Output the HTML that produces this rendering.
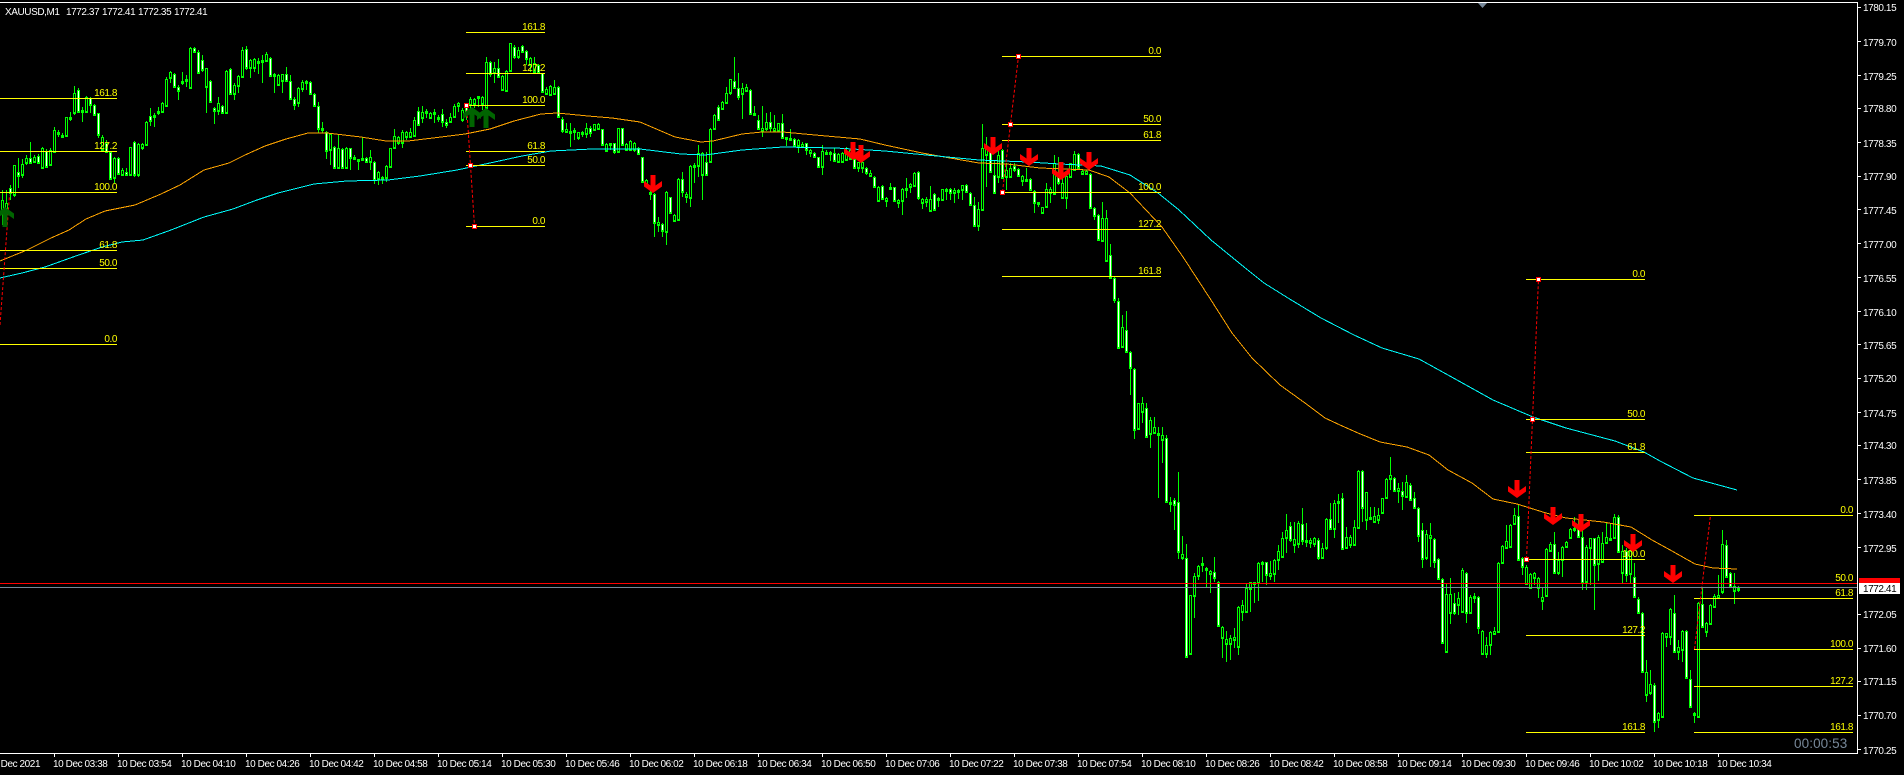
<!DOCTYPE html>
<html><head><meta charset="utf-8"><title>XAUUSD,M1</title>
<style>
html,body{margin:0;padding:0;background:#000;width:1904px;height:775px;overflow:hidden}
svg{display:block}
text{font-family:"Liberation Sans",sans-serif;font-size:10px;letter-spacing:-.42px;fill:#fff}
.y text{fill:#ff0;text-anchor:end}
</style></head><body>
<svg width="1904" height="775" viewBox="0 0 1904 775" xmlns="http://www.w3.org/2000/svg">
<rect width="1904" height="775" fill="#000"/>
<defs>
<path id="u" d="M2 201V209M6 204V208M14 166V194M22 165V174M26 159V162M34 158V161M42 149V167M50 151V164M54 131V151M62 136V136M66 118V135M74 94V112M82 111V111M86 98V111M102 138V149M114 159V177M122 171V174M130 148V174M138 145V174M142 145V147M146 123V144M154 116V116M158 112V112M162 104V111M166 80V105M170 73V77M182 82V82M186 80V80M190 49V87M206 69V86M218 104V110M226 72V112M234 86V93M238 77V85M242 51V76M250 61V67M254 60V67M262 61V61M266 55V60M274 75V75M278 76V84M282 75V80M298 89V102M302 83V88M306 82V82M322 129V129M330 135V149M338 149V167M346 149V167M354 158V158M358 160V160M362 159V159M370 158V161M378 173V178M382 178V178M386 167V177M390 149V166M394 137V147M398 138V142M402 133V142M406 133V136M410 133V136M414 121V135M422 113V117M426 112V112M430 114V117M438 118V118M450 118V121M454 107V116M458 104V105M462 111V119M470 100V104M474 100V103M478 97V97M482 98V103M486 63V107M494 69V72M502 77V89M506 72V90M510 44V70M518 51V56M530 59V64M534 64V71M546 90V93M550 87V94M554 88V93M566 130V131M570 132V132M574 131V131M578 133V137M582 133V133M586 129V133M594 125V129M598 125V128M606 145V150M610 144V144M618 129V151M626 145V149M630 142V149M634 144V149M646 181V184M650 193V193M658 223V224M666 193V231M674 216V220M678 180V219M686 195V196M690 167V197M694 166V166M698 154V165M702 154V174M710 130V161M714 116V128M722 103V108M726 94V102M730 80V92M742 89V93M746 88V90M754 114V114M762 129V130M766 123V128M774 129V130M778 124V130M786 138V138M790 139V139M798 141V145M802 145V146M810 151V152M822 152V166M826 153V153M830 153V153M838 155V161M842 154V161M846 154V159M850 151V158M858 163V167M862 163V167M870 174V175M878 188V200M886 199V200M890 188V188M898 201V202M902 190V200M906 189V189M910 185V186M914 174V185M922 200V202M926 200V201M930 200V210M938 199V199M942 190V199M946 190V190M954 191V192M958 191V191M962 186V189M978 210V225M982 149V209M986 149V154M998 156V176M1006 171V176M1010 169V176M1022 177V180M1026 180V180M1038 203V203M1042 208V212M1046 190V206M1050 190V192M1054 164V193M1062 184V197M1066 177V197M1070 164V176M1074 155V169M1082 172V173M1086 172V173M1102 219V240M1106 219V260M1122 328V346M1138 404V428M1142 404V411M1150 421V433M1154 428V432M1158 434V434M1162 436V439M1170 503V503M1182 555V557M1190 596V653M1194 577V595M1198 567V575M1202 564V564M1206 569V569M1210 572V573M1222 628V637M1226 640V643M1230 639V643M1234 638V639M1238 608V646M1242 606V611M1246 589V611M1250 583V588M1254 583V583M1258 564V582M1262 563V563M1270 574V575M1274 561V573M1278 552V559M1282 539V556M1286 531V537M1294 540V544M1298 524V543M1306 541V541M1310 541V542M1314 539V543M1322 549V557M1326 520V547M1334 504V528M1338 502V502M1346 538V547M1350 538V544M1354 528V544M1358 472V527M1366 493V519M1370 518V518M1374 517V521M1378 516V519M1382 499V512M1386 480V497M1390 476V478M1398 489V490M1406 483V496M1426 535V557M1430 536V537M1446 595V651M1450 595V612M1458 599V604M1462 571V611M1470 598V612M1474 597V597M1482 632V653M1486 646V653M1490 633V644M1494 632V633M1498 564V631M1502 547V562M1506 542V547M1510 526V546M1514 516V523M1526 568V583M1530 575V587M1534 574V577M1538 579V587M1542 598V600M1546 550V595M1550 545V550M1558 561V572M1562 548V559M1566 543V546M1570 530V537M1574 529V529M1586 548V581M1590 539V547M1598 538V563M1602 544V561M1606 538V542M1610 539V539M1614 518V537M1622 552V572M1630 552V573M1646 673V694M1650 685V692M1658 714V719M1662 634V716M1666 634V636M1670 610V636M1678 648V651M1682 632V649M1694 714V714M1698 604V716M1706 624V631M1710 606V623M1714 597V606M1718 596V597M1722 545V591M1734 587V590M1738 589V589"/>
<path id="d" d="M10 189V192M18 173V175M30 159V162M38 157V162M46 152V166M58 133V133M70 118V118M78 91V111M90 99V104M94 106V114M98 114V134M106 144V151M110 153V178M118 159V173M126 173V174M134 143V174M150 117V120M174 75V86M178 88V90M194 49V51M198 53V72M202 61V69M210 82V101M214 109V110M222 107V112M230 70V93M246 50V67M258 62V62M270 59V75M286 75V80M290 82V98M294 100V104M310 83V93M314 95V105M318 107V128M326 133V150M334 148V167M342 150V167M350 149V157M366 159V161M374 163V179M418 112V124M434 113V113M442 115V121M446 123V124M466 106V112M490 63V73M498 69V76M514 48V56M522 47V51M526 52V58M538 66V72M542 74V91M558 88V116M562 120V130M590 129V132M602 130V144M614 144V151M622 129V144M638 149V153M642 158V181M654 195V222M662 225V230M670 198V212M682 180V191M706 163V174M718 108V119M734 82V87M738 89V96M750 91V113M758 121V128M770 123V127M782 124V137M794 140V145M806 144V149M814 154V156M818 158V166M834 154V160M854 160V167M866 169V172M874 178V186M882 187V198M894 188V200M918 173V197M934 195V209M950 190V192M966 186V191M970 194V204M974 206V225M990 153V171M994 176V192M1002 151V177M1014 167V169M1018 170V175M1030 180V189M1034 192V202M1058 178V182M1078 155V167M1090 175V207M1094 209V215M1098 216V239M1110 256V277M1114 279V299M1118 302V347M1126 331V351M1130 353V367M1134 370V429M1146 409V436M1166 439V501M1174 501V504M1178 503V551M1186 559V656M1214 573V577M1218 583V625M1266 563V574M1290 527V539M1302 525V540M1318 541V557M1330 520V528M1342 499V548M1362 472V507M1394 479V490M1402 492V495M1410 486V499M1414 499V507M1418 509V535M1422 531V558M1434 540V561M1438 560V578M1442 580V642M1454 604V612M1466 574V612M1478 598V627M1518 517V559M1522 559V566M1554 545V572M1578 530V536M1582 538V582M1594 539V564M1618 518V551M1626 552V574M1634 578V596M1638 600V612M1642 614V671M1654 686V721M1674 614V651M1686 632V677M1690 680V706M1702 605V626M1726 546V576M1730 574V586"/>
<path id="ra" d="M-2.500-18H2.500V-7.500L9-12V-6.500L0 0L-9-6.500V-12L-2.500-7.500Z" fill="#f00"/>
<path id="ga" d="M0 0L9 6.500V12L2.500 7.500V20H-2.500V7.500L-9 12V6.500Z" fill="#006400"/>
</defs>

<!-- wicks -->
<g transform="translate(.5,0)" fill="none" stroke="#0f0" stroke-width="1">
<path d="M2 190V225M6 190V225M10 185V200M14 165V197M18 158V188M22 159V178M26 155V165M30 142V163M34 155V163M38 154V163M42 147V169M46 149V168M50 148V166M54 127V153M58 130V137M62 133V138M66 117V137M70 112V121M74 86V115M78 88V113M82 107V122M86 96V113M90 97V113M94 104V116M98 113V138M102 135V152M106 140V153M110 151V180M114 157V183M118 157V175M122 168V176M126 168V176M130 147V176M134 141V177M138 143V177M142 143V150M146 121V146M150 108V126M154 113V127M158 107V115M162 102V113M166 77V107M170 71V83M174 73V88M178 85V100M182 72V85M186 75V87M190 47V89M194 47V53M198 50V74M202 55V72M206 68V113M210 80V103M214 107V124M218 97V115M222 105V114M226 70V114M230 68V95M234 83V100M238 75V93M242 47V78M246 46V70M250 59V78M254 58V72M258 58V74M262 55V83M266 52V62M270 57V77M274 73V93M278 74V86M282 74V93M286 67V82M290 75V100M294 97V110M298 87V107M302 80V92M306 80V90M310 81V95M314 93V107M318 102V133M322 122V133M326 131V159M330 133V165M334 146V169M338 135V169M342 148V169M346 147V169M350 148V170M354 155V160M358 159V170M362 137V161M366 157V162M370 150V170M374 161V184M378 171V185M382 176V184M386 165V182M390 148V167M394 129V149M398 136V145M402 130V148M406 131V140M410 128V137M414 117V136M418 107V126M422 106V123M426 109V118M430 112V119M434 109V123M438 115V122M442 109V127M446 119V128M450 113V123M454 104V117M458 102V112M462 108V122M466 103V120M470 97V110M474 98V108M478 96V107M482 96V110M486 57V109M490 61V77M494 62V83M498 59V78M502 75V91M506 70V91M510 43V71M514 45V59M518 47V59M522 45V53M526 50V65M530 57V72M534 57V73M538 64V74M542 73V93M546 87V95M550 85V96M554 80V95M558 86V117M562 117V133M566 123V133M570 123V147M574 128V140M578 132V140M582 131V137M586 123V138M590 126V137M594 124V131M598 123V130M602 129V146M606 143V152M610 143V150M614 143V154M618 128V152M622 128V146M626 143V151M630 140V151M634 142V152M638 147V155M642 157V183M646 179V187M650 187V200M654 193V237M658 217V232M662 223V237M666 191V245M670 197V214M674 214V222M678 178V221M682 172V197M686 192V203M690 165V207M694 163V183M698 145V177M702 152V200M706 152V176M710 128V162M714 114V130M718 105V121M722 101V110M726 87V103M730 79V95M734 57V89M738 73V100M742 83V119M746 84V92M750 89V115M754 106V116M758 115V130M762 106V137M766 113V131M770 112V132M774 115V132M778 123V132M782 114V139M786 137V146M790 129V141M794 138V147M798 139V153M802 142V148M806 143V155M810 149V157M814 152V158M818 157V168M822 145V175M826 150V155M830 151V161M834 148V162M838 153V162M842 152V162M846 147V161M850 149V160M854 158V168M858 162V172M862 157V173M866 167V175M870 170V177M874 176V187M878 186V201M882 185V200M886 197V207M890 183V190M894 187V202M898 199V208M902 188V215M906 178V198M910 183V193M914 172V187M918 171V200M922 198V209M926 197V207M930 186V211M934 193V211M938 197V207M942 189V201M946 188V200M950 188V200M954 188V203M958 189V199M962 185V200M966 184V193M970 192V206M974 197V227M978 202V231M982 124V211M986 137V187M990 150V172M994 160V193M998 150V183M1002 149V179M1006 163V190M1010 163V178M1014 163V172M1018 168V177M1022 175V186M1026 168V182M1030 178V191M1034 190V213M1038 202V207M1042 207V213M1046 183V208M1050 187V203M1054 155V195M1058 157V185M1062 168V198M1066 175V209M1070 163V177M1074 151V171M1078 153V169M1082 170V175M1086 170V175M1090 173V209M1094 207V220M1098 214V241M1102 202V242M1106 210V262M1110 244V279M1114 277V303M1118 298V349M1122 315V347M1126 311V352M1130 351V395M1134 368V439M1138 403V430M1142 397V423M1146 403V438M1150 417V448M1154 417V434M1158 427V498M1162 427V463M1166 435V502M1170 497V512M1174 498V530M1178 472V559M1182 536V560M1186 544V657M1190 595V655M1194 573V618M1198 565V580M1202 557V572M1206 567V588M1210 570V593M1214 557V582M1218 581V627M1222 626V658M1226 631V662M1230 635V660M1234 628V648M1238 606V655M1242 600V621M1246 583V612M1250 582V612M1254 582V603M1258 562V601M1262 561V582M1266 562V585M1270 561V580M1274 559V582M1278 545V570M1282 532V558M1286 514V553M1290 522V542M1294 522V553M1298 521V548M1302 508V545M1306 523V547M1310 538V548M1314 537V547M1318 538V560M1322 543V558M1326 518V550M1330 503V530M1334 500V538M1338 494V523M1342 493V550M1346 527V549M1350 535V548M1354 520V546M1358 470V528M1362 470V522M1366 492V530M1370 507V520M1374 507V522M1378 508V524M1382 498V514M1386 478V499M1390 457V490M1394 477V492M1398 483V503M1402 482V510M1406 475V497M1410 483V501M1414 492V508M1418 507V542M1422 523V568M1426 530V560M1430 523V567M1434 538V568M1438 558V580M1442 578V644M1446 584V652M1450 578V624M1454 593V615M1458 592V615M1462 568V613M1466 572V623M1470 595V613M1474 593V603M1478 596V634M1482 630V655M1486 637V658M1490 631V655M1494 627V635M1498 562V633M1502 545V564M1506 525V548M1510 524V548M1514 508V525M1518 504V561M1522 557V575M1526 565V585M1530 573V589M1534 572V585M1538 577V598M1542 588V610M1546 548V597M1550 542V552M1554 532V574M1558 552V575M1562 546V577M1566 541V548M1570 528V538M1574 517V532M1578 520V538M1582 527V590M1586 545V590M1590 538V585M1594 538V610M1598 535V581M1602 532V563M1606 523V544M1610 523V541M1614 514V539M1618 515V553M1622 545V583M1626 548V582M1630 550V583M1634 563V598M1638 597V613M1642 612V673M1646 660V702M1650 670V695M1654 683V732M1658 712V728M1662 632V718M1666 633V647M1670 608V645M1674 595V652M1678 640V660M1682 630V662M1686 630V678M1690 670V708M1694 712V723M1698 602V718M1702 587V628M1706 622V637M1710 604V625M1714 594V608M1718 575V598M1722 530V594M1726 540V578M1730 572V588M1734 573V604M1738 586V592"/>
</g>
<!-- bodies -->
<g transform="translate(.5,.5)" fill="none" stroke="#0f0" stroke-width="3" stroke-linecap="square">
<use href="#u"/><use href="#d"/>
</g>
<g transform="translate(.5,0)" fill="none" stroke-width="1">
<use href="#u" stroke="#000"/><use href="#d" stroke="#fff"/>
</g>

<!-- moving averages -->
<polyline fill="none" stroke="#ffa500" stroke-width="1" shape-rendering="crispEdges" points="0,261 27,250 51,238 69,230 86,219 105,211 135,205 161,194 180,185 204,170 229,163 245,155 265,146 286,139 308,133 327,133 361,137 386,141 408,141 433,138 465,134 490,129 514,121 541,114 557,113 588,116 612,118 640,122 675,137 701,142 713,141 742,134 762,132 783,132 815,135 860,139 885,145 922,153 950,158 979,163 1007,164 1040,168 1089,170 1109,177 1130,193 1162,227 1183,257 1211,300 1232,333 1252,358 1280,385 1305,403 1325,418 1340,425 1358,433 1380,442 1407,447 1429,455 1448,470 1472,483 1493,499 1517,504 1546,513 1566,518 1603,522 1631,527 1652,540 1672,551 1695,564 1713,568 1737,569"/>
<polyline fill="none" stroke="#0ff" stroke-width="1" shape-rendering="crispEdges" points="0,278 22,273 45,267 73,257 102,247 122,242 143,240 171,230 204,217 233,209 257,200 278,193 314,184 347,181 388,180 420,176 457,170 490,163 522,156 551,151 592,149 640,149 681,154 705,155 742,150 783,147 836,148 885,151 926,155 979,160 1028,162 1060,164 1101,166 1130,175 1158,193 1179,210 1211,240 1244,267 1264,283 1288,298 1321,318 1354,335 1382,348 1419,359 1448,375 1466,385 1493,400 1533,417 1566,428 1615,441 1644,452 1660,461 1693,478 1737,490"/>

<!-- fibonacci levels -->
<g stroke="#ff0" stroke-width="1" fill="none">
<path d="M0 98.500H117M0 151.500H117M0 192.500H117M0 250.500H117M0 268.500H117M0 344.500H117"/>
<path d="M466 32.500H545M466 73.500H545M466 105.500H545M466 151.500H545M466 165.500H545M466 226.500H545"/>
<path d="M1002 56.500H1161M1002 124.500H1161M1002 140.500H1161M1002 192.500H1161M1002 229.500H1161M1002 276.500H1161"/>
<path d="M1526 279.500H1645M1526 419.500H1645M1526 452.500H1645M1526 559.500H1645M1526 635.500H1645M1526 732.500H1645"/>
<path d="M1694 515.500H1853M1694 583.500H1853M1694 598.500H1853M1694 649.500H1853M1694 686.500H1853M1694 732.500H1853"/>
</g>
<g class="y">
<text x="117" y="96">161.8</text><text x="117" y="149">127.2</text><text x="117" y="190">100.0</text><text x="117" y="248">61.8</text><text x="117" y="266">50.0</text><text x="117" y="342">0.0</text>
<text x="545" y="30">161.8</text><text x="545" y="71">127.2</text><text x="545" y="103">100.0</text><text x="545" y="149">61.8</text><text x="545" y="163">50.0</text><text x="545" y="224">0.0</text>
<text x="1161" y="54">0.0</text><text x="1161" y="122">50.0</text><text x="1161" y="138">61.8</text><text x="1161" y="190">100.0</text><text x="1161" y="227">127.2</text><text x="1161" y="274">161.8</text>
<text x="1645" y="277">0.0</text><text x="1645" y="417">50.0</text><text x="1645" y="450">61.8</text><text x="1645" y="557">100.0</text><text x="1645" y="633">127.2</text><text x="1645" y="730">161.8</text>
<text x="1853" y="513">0.0</text><text x="1853" y="581">50.0</text><text x="1853" y="596">61.8</text><text x="1853" y="647">100.0</text><text x="1853" y="684">127.2</text><text x="1853" y="730">161.8</text>
</g>

<!-- trend lines -->
<g fill="none" stroke="#f00" stroke-width="1" stroke-dasharray="3 2">
<path d="M0 325L9.500 195M466.500 105L474.500 226M1002.500 192L1018.500 56M1526.500 559L1538.500 279M1694.500 649L1710.500 515"/>
</g>
<g fill="#f00">
<rect x="464" y="103" width="5" height="5"/><rect x="468" y="163" width="5" height="5"/><rect x="472" y="224" width="5" height="5"/>
<rect x="1000" y="190" width="5" height="5"/><rect x="1008" y="122" width="5" height="5"/><rect x="1016" y="54" width="5" height="5"/>
<rect x="1524" y="557" width="5" height="5"/><rect x="1530" y="417" width="5" height="5"/><rect x="1536" y="277" width="5" height="5"/>
</g>
<g fill="#fff">
<rect x="465" y="104" width="3" height="3"/><rect x="469" y="164" width="3" height="3"/><rect x="473" y="225" width="3" height="3"/>
<rect x="1001" y="191" width="3" height="3"/><rect x="1009" y="123" width="3" height="3"/><rect x="1017" y="55" width="3" height="3"/>
<rect x="1525" y="558" width="3" height="3"/><rect x="1531" y="418" width="3" height="3"/><rect x="1537" y="278" width="3" height="3"/>
</g>

<!-- arrows -->
<use href="#ga" x="5" y="207"/><use href="#ga" x="472" y="107"/><use href="#ga" x="486" y="108"/>
<use href="#ra" x="653" y="193"/><use href="#ra" x="853" y="160"/><use href="#ra" x="861" y="163"/><use href="#ra" x="993" y="155"/><use href="#ra" x="1029" y="166"/><use href="#ra" x="1061" y="180"/><use href="#ra" x="1089" y="170"/><use href="#ra" x="1517" y="498"/><use href="#ra" x="1553" y="525"/><use href="#ra" x="1581" y="532"/><use href="#ra" x="1633" y="552"/><use href="#ra" x="1673" y="583"/>

<!-- price lines -->
<rect x="0" y="583" width="1857" height="1" fill="#f00"/>
<rect x="0" y="587" width="1857" height="1" fill="#778899"/>

<!-- frame -->
<rect x="0" y="2" width="1858" height="1" fill="#fff"/>
<rect x="1857" y="2" width="1" height="752" fill="#fff"/>
<rect x="0" y="753" width="1858" height="1" fill="#fff"/>
<path d="M1478 3H1487L1482.500 8Z" fill="#778899"/>

<!-- price axis -->
<path stroke="#fff" stroke-width="1" d="M1858 7.500h3M1858 41.500h3M1858 75.500h3M1858 108.500h3M1858 142.500h3M1858 176.500h3M1858 209.500h3M1858 243.500h3M1858 277.500h3M1858 311.500h3M1858 344.500h3M1858 378.500h3M1858 412.500h3M1858 445.500h3M1858 479.500h3M1858 513.500h3M1858 547.500h3M1858 614.500h3M1858 648.500h3M1858 681.500h3M1858 715.500h3M1858 749.500h3"/>
<g>
<text x="1863" y="11">1780.15</text><text x="1863" y="46">1779.70</text><text x="1863" y="80">1779.25</text><text x="1863" y="112">1778.80</text><text x="1863" y="147">1778.35</text><text x="1863" y="180">1777.90</text><text x="1863" y="214">1777.45</text><text x="1863" y="248">1777.00</text><text x="1863" y="282">1776.55</text><text x="1863" y="316">1776.10</text><text x="1863" y="349">1775.65</text><text x="1863" y="382">1775.20</text><text x="1863" y="417">1774.75</text><text x="1863" y="449">1774.30</text><text x="1863" y="484">1773.85</text><text x="1863" y="518">1773.40</text><text x="1863" y="552">1772.95</text><text x="1863" y="618">1772.05</text><text x="1863" y="652">1771.60</text><text x="1863" y="685">1771.15</text><text x="1863" y="719">1770.70</text><text x="1863" y="754">1770.25</text>
</g>
<rect x="1859" y="578" width="41" height="6" fill="#f00"/>
<rect x="1859" y="583" width="41" height="11" fill="#fff"/>
<text x="1863" y="592" style="fill:#000">1772.41</text>

<!-- time axis -->
<path stroke="#fff" stroke-width="1" d="M54.500 754v3M118.500 754v3M182.500 754v3M246.500 754v3M310.500 754v3M374.500 754v3M438.500 754v3M502.500 754v3M566.500 754v3M630.500 754v3M694.500 754v3M758.500 754v3M822.500 754v3M886.500 754v3M950.500 754v3M1014.500 754v3M1078.500 754v3M1142.500 754v3M1206.500 754v3M1270.500 754v3M1334.500 754v3M1398.500 754v3M1462.500 754v3M1526.500 754v3M1590.500 754v3M1654.500 754v3M1718.500 754v3"/>
<g>
<text x="-12" y="767">10 Dec 2021</text><text x="53" y="767">10 Dec 03:38</text><text x="117" y="767">10 Dec 03:54</text><text x="181" y="767">10 Dec 04:10</text><text x="245" y="767">10 Dec 04:26</text><text x="309" y="767">10 Dec 04:42</text><text x="373" y="767">10 Dec 04:58</text><text x="437" y="767">10 Dec 05:14</text><text x="501" y="767">10 Dec 05:30</text><text x="565" y="767">10 Dec 05:46</text><text x="629" y="767">10 Dec 06:02</text><text x="693" y="767">10 Dec 06:18</text><text x="757" y="767">10 Dec 06:34</text><text x="821" y="767">10 Dec 06:50</text><text x="885" y="767">10 Dec 07:06</text><text x="949" y="767">10 Dec 07:22</text><text x="1013" y="767">10 Dec 07:38</text><text x="1077" y="767">10 Dec 07:54</text><text x="1141" y="767">10 Dec 08:10</text><text x="1205" y="767">10 Dec 08:26</text><text x="1269" y="767">10 Dec 08:42</text><text x="1333" y="767">10 Dec 08:58</text><text x="1397" y="767">10 Dec 09:14</text><text x="1461" y="767">10 Dec 09:30</text><text x="1525" y="767">10 Dec 09:46</text><text x="1589" y="767">10 Dec 10:02</text><text x="1653" y="767">10 Dec 10:18</text><text x="1717" y="767">10 Dec 10:34</text>
</g>

<!-- header -->
<text x="5" y="15">XAUUSD,M1</text><text x="66" y="15">1772.37</text><text x="102" y="15">1772.41</text><text x="138" y="15">1772.35</text><text x="174" y="15">1772.41</text>

<!-- timer -->
<text x="1794" y="748" style="font-size:13.500px;letter-spacing:.1px;fill:#778899">00:00:53</text>
</svg>
</body></html>
